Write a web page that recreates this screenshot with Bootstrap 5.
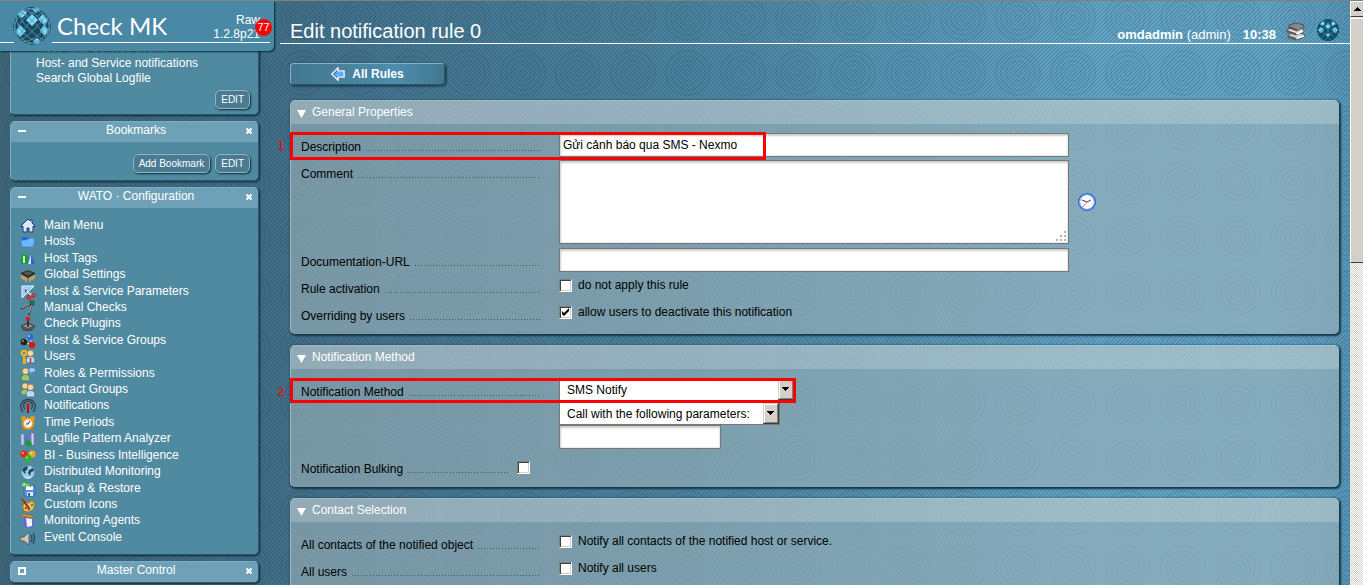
<!DOCTYPE html>
<html lang="en">
<head>
<meta charset="utf-8">
<meta name="viewport" content="width=device-width, initial-scale=1">
<title>Check MK - Edit notification rule 0</title>
<link href="https://cdn.jsdelivr.net/npm/bootstrap@5.3.0/dist/css/bootstrap.min.css" rel="stylesheet">
<style>
  body {
    font-family: "Liberation Sans", Arial, sans-serif;
    font-size: 12px; line-height: 16px; color: #000;
    background:
      url("data:image/svg+xml,%3Csvg xmlns='http://www.w3.org/2000/svg' width='55' height='55'%3E%3Cg fill='none' stroke='%23002038' stroke-opacity='.07' stroke-width='2'%3E%3Ccircle cx='27' cy='27' r='3'/%3E%3Ccircle cx='27' cy='27' r='8'/%3E%3Ccircle cx='27' cy='27' r='12'/%3E%3Ccircle cx='27' cy='27' r='17'/%3E%3Ccircle cx='27' cy='27' r='22'/%3E%3C/g%3E%3C/svg%3E") 1px 46px,
      url("data:image/svg+xml,%3Csvg xmlns='http://www.w3.org/2000/svg' width='4' height='4'%3E%3Cpath d='M-1 1L1-1M0 4L4 0M3 5L5 3' stroke='%23001828' stroke-opacity='.18'/%3E%3C/svg%3E"),
      linear-gradient(90deg, #40667a 0, #42708a 22%, #4b829d 50%, #61a1c1 80%, #62a2c2 94%, #5593b3 100%);
    border-top: 1px solid #808080;
  }
  a { color: #fff; text-decoration: none; }
  a:hover { color: #dff; }

  /* sidebar */
  .side { width: 274px; }
  .side-top { height: 50px; background: #4a89a6; border-bottom-right-radius: 5px; box-shadow: 1px 1px 2px #0a2a3a; z-index: 2; }
  .side-top .rule { height: 1px; background: #fff; left: 0; right: 4px; top: 41px; }
  .brand-mark { left: 12px; top: 5px; width: 40px; height: 40px; }
  .brand-disc { background: #4a89a6; left: 14px; top: 38px; width: 38px; height: 8px; }
  .brand-name { font-family: Lato, sans-serif; font-size: 24px; line-height: 32px; padding: 9px 0 0 57px; }
  .version { right: 14px; top: 12px; line-height: 14px; }
  .count { right: 2px; top: 18px; width: 17px; height: 17px; font-size: 11px; line-height: 17px; background: #f00; }
  .side-list { padding: 0 15px 0 10px; gap: 6px; }
  .snapin { background: #508aa0; border: 1px solid #7eafc3; border-right-color: #2f5a6e; border-bottom-color: #2f5a6e; border-radius: 5px; box-shadow: 1px 1px 2px #0a2a3a; overflow: hidden; }
  .snapin-head { background: #6ea1b8; height: 20px; line-height: 16px; padding: 0 4px 0 7px; }
  .snapin-head button { background: none; border: 0; padding: 0; width: 9px; height: 18px; }
  .snapin-head svg { display: block; width: 9px; height: 9px; }
  .events { margin-top: -42px; height: 106px; padding: 31px 8px 0 25px; line-height: 15px; }
  .btn-mini { font-size: 10px; line-height: 13px; color: #fff; padding: 2px 5px; background: #4a7b93; border: 1px solid #8fb6c6; border-radius: 5px; box-shadow: 1px 1px 2px #0a2a3a; }
  .marks-foot { gap: 5px; padding: 12px 8px 7px; }
  .wato { min-height: 346px; padding: 9px; }
  .wato svg { width: 16px; height: 16px; flex: none; position: relative; top: 1px; }
  .wato a { gap: 8px; }

  /* main column */
  .main { padding: 0 11px 0 16px; }
  .page-head { margin: 0 -11px 0 -10px; padding: 17px 10px 0 10px; height: 43px; border-bottom: 1px solid #fff; color: #fff; }
  .page-head h1 { font-size: 20px; line-height: 26px; margin: 0; }
  .page-head svg { width: 24px; height: 24px; }
  .who { font-size: 13px; line-height: 16px; padding-top: 9px; }
  .btn-rules { width: 155px; height: 22px; margin: 19px 0 15px; font-weight: bold; color: #fff; font-size: 12px; gap: 7px;
    background: linear-gradient(90deg, #437790, #4d8cab 70%, #42768f); border: 1px solid #86b3c6; border-right-color: #2d586c; border-bottom-color: #2d586c; border-radius: 4px; box-shadow: 1px 1px 3px #0a2a3a; }
  .btn-rules svg { width: 14px; height: 14px; }
  .panel { background: rgba(163, 185, 190, .57); border-radius: 5px; box-shadow: 1px 1px 2px 1px #143646; border-top: 1px solid rgba(255,255,255,.3); border-left: 1px solid rgba(255,255,255,.3); margin-bottom: 11px; }
  .panel-head { height: 23px; background: rgba(255,255,255,.2); color: #fff; gap: 6px; padding: 0 6px; border-radius: 4px 4px 0 0; }
  .panel-head h2 { font-size: 12px; line-height: 23px; margin: 0; }
  .panel-head button { background: none; border: 0; padding: 3px 0 0; line-height: 0; }
  .panel-body { padding: 9px 10px 5px; }
  .f-row { display: grid; grid-template-columns: 240px 1fr; column-gap: 18px; margin-bottom: 3px; position: relative; }
  .f-label { display: flex; gap: 5px; height: 24px; padding-top: 6px; }
  .f-label::after { content: ""; flex: 1; height: 12px; background: repeating-linear-gradient(90deg, #41565f 0 1px, transparent 1px 3px) left bottom / 100% 1px no-repeat; }
  .f-box { border: 1px solid #777; border-radius: 0; background: #fff; box-shadow: inset 1px 2px 2px #ccc, inset -1px -1px 1px #e8e8e8; padding: 0 3px; font-size: 12px; color: #000; width: 510px; max-width: 100%; height: 24px; display: block; }
  textarea.f-box { height: 84px; resize: none; }
  .f-small { width: 162px; }
  .f-select { appearance: none; border: 1px solid #777; border-radius: 0; font-size: 12px; color: #000; padding: 0 7px; display: block;
    background: #fff url("data:image/svg+xml,%3Csvg xmlns='http://www.w3.org/2000/svg' width='16' height='21'%3E%3Cpath fill='%23404040' d='M0 0h16v21H0z'/%3E%3Cpath fill='%23d4d0c8' d='M0 0h15v20H0z'/%3E%3Cpath fill='%23fff' d='M1 1h13v1H2v17H1z'/%3E%3Cpath fill='%23808080' d='M14 1v18H2v1h13V1z'/%3E%3Cpath fill='%23d4d0c8' d='M2 2h12v17H2z'/%3E%3Cpath d='M4 8h7v1H4zM5 9h5v1H5zM6 10h3v1H6zM7 11h1v1H7z'/%3E%3C/svg%3E") right 0 top 0 no-repeat; height: 23px; }
  .sel-method { width: 236px; }
  .sel-params { width: 221px; margin-top: 1px; }
  .f-method { margin-bottom: 6px; }
  .f-check { appearance: none; width: 13px; height: 13px; margin: 0; flex: none; background: #fff; border: 1px solid; border-color: #808080 #fff #fff #808080; box-shadow: inset 1px 1px #404040, inset -1px -1px #d4d0c8; }
  .f-check:checked { background: #fff url("data:image/svg+xml,%3Csvg xmlns='http://www.w3.org/2000/svg' width='11' height='11'%3E%3Cpath d='M2 4v3l2 2 5-5V1L4 6z'/%3E%3C/svg%3E"); }
  .f-tick { display: flex; align-items: center; gap: 6px; height: 16px; }
  .resize-grip { right: 2px; bottom: 2px; width: 12px; height: 12px; }
  .bulk { grid-template-columns: 209px 1fr; column-gap: 7px; }
  /* numbered highlight frames that lie over the form */
  .hl { position: absolute; left: -11px; border: 3px solid #f00; pointer-events: none; }
  .hl b { position: absolute; left: -16px; top: 3px; color: #f00; font: 12px/16px "DejaVu Sans", sans-serif; }
  .hl-1 { top: -1px; width: 476px; height: 28px; }
  .hl-2 { top: 0; width: 506px; height: 25px; }

  /* scroll bar */
  .sbar { width: 13px; background: repeating-conic-gradient(#fff 0 25%, #d4d0c8 0 50%) 0 0 / 2px 2px; overflow: hidden; }
  .sbar div { width: 16px; background: #d4d0c8; border: 1px solid; border-color: #fff #404040 #404040 #fff; }
  .sbar .s-up { height: 16px; padding: 5px 3px; line-height: 0; }
  .sbar .s-thumb { height: 245px; margin-top: 1px; }
</style>
</head>
<body class="vh-100 overflow-hidden d-flex">

<svg width="0" height="0" class="position-absolute" aria-hidden="true">
  <defs>
    <clipPath id="disc"><circle r="19"/></clipPath>
    <symbol id="globe" viewBox="-20 -20 40 40">
      <g clip-path="url(#disc)">
        <circle r="19" fill="#174a5e"/>
        <g fill="#7fdcff">
          <path d="M0-12L6-6 0 0-6-6zM-12-1L-6 5-12 11-17 6zM11-12L16-6 12-1 6-7zM12-1L17 4 13 10 8 5zM-9-18L-5-13-10-8-15-12zM4-19L8-17 4-13 0-17zM5 12L9 15 5 19 1 15z"/>
        </g>
        <g fill="none" stroke="#5793ad" stroke-width=".9">
          <g transform="rotate(45)"><ellipse rx="4" ry="19"/><ellipse rx="11" ry="19"/><ellipse rx="16" ry="19"/></g>
          <g transform="rotate(-45)"><ellipse rx="4" ry="19"/><ellipse rx="11" ry="19"/><ellipse rx="16" ry="19"/></g>
        </g>
      </g>
    </symbol>
    <symbol id="globe-small" viewBox="-12 -12 24 24">
      <circle r="11" fill="#0f5068"/>
      <path d="M0-7l3 3-3 3-3-3zM-7-3l3 3-3 3-3-3zM7-3l3 3-3 3-3-3zM5-9l3 3-3 2-2-2zM-5-9l2 3-3 2-2-2zM0 3l2 2-2 2-2-2z" fill="#86dcf8"/>
      <path d="M-8-7L7 8M-4-10L10 4M-10-3L3 10M8-7L-7 8M4-10L-10 4M10-3L-3 10" stroke="#3f86a4" stroke-width=".7"/>
    </symbol>
    <symbol id="x" viewBox="0 0 9 9"><path d="M1.500 1.500l5 5M6.500 1.500l-5 5" stroke="#fff" stroke-width="2"/></symbol>
    <symbol id="man" viewBox="0 0 10 14"><path d="M1 13V10Q1 7 5 7T9 10V13z" stroke="#456" stroke-width=".6"/><circle cx="5" cy="4" r="3" fill="#f4d6a0" stroke="#8a6a30" stroke-width=".6"/></symbol>
  </defs>
</svg>

<aside class="side d-flex flex-column flex-shrink-0 text-white vh-100">
  <header class="side-top position-relative flex-shrink-0">
    <div class="rule position-absolute"></div>
    <div class="brand-disc position-absolute"></div>
    <svg class="brand-mark position-absolute" aria-hidden="true"><use href="#globe"/></svg>
    <div class="brand-name">Check MK</div>
    <div class="version position-absolute text-end">Raw<br>1.2.8p21</div>
    <span class="count position-absolute rounded-circle text-center">77</span>
  </header>

  <nav class="side-list d-flex flex-column">
    <section class="snapin events d-flex flex-column flex-shrink-0">
      <a href="#">Host- and Service events</a>
      <a href="#">Host- and Service notifications</a>
      <a href="#">Search Global Logfile</a>
      <div class="text-end mt-1"><button class="btn-mini">EDIT</button></div>
    </section>

    <section class="snapin flex-shrink-0">
      <div class="snapin-head d-flex justify-content-between">
        <button aria-label="Collapse"><svg><path d="M0 3h8v2H0z" fill="#fff"/></svg></button>
        <span>Bookmarks</span>
        <button aria-label="Close"><svg><use href="#x"/></svg></button>
      </div>
      <div class="marks-foot d-flex justify-content-end">
        <button class="btn-mini">Add Bookmark</button><button class="btn-mini">EDIT</button>
      </div>
    </section>

    <section class="snapin flex-shrink-0">
      <div class="snapin-head d-flex justify-content-between">
        <button aria-label="Collapse"><svg><path d="M0 3h8v2H0z" fill="#fff"/></svg></button>
        <span>WATO · Configuration</span>
        <button aria-label="Close"><svg><use href="#x"/></svg></button>
      </div>
      <ul class="wato list-unstyled m-0 d-flex flex-column">
        <li class="flex-fill"><a class="d-flex" href="#"><svg viewBox="0 0 16 16"><path d="M1 8L8 1l2 2V2h2v3l3 3-1 1-1-1v6H9v-4H7v4H3V8L2 9z" fill="#dce9fa" stroke="#1d3c70"/></svg>Main Menu</a></li>
        <li class="flex-fill"><a class="d-flex" href="#"><svg viewBox="0 0 16 16"><path d="M2 3h5l1 1h5v9H2z" fill="#2368c8"/><path d="M1 6q4 1 7-1t7 0l-2 8H2z" fill="#6db8fa" stroke="#2f7de0" stroke-width=".6"/></svg>Hosts</a></li>
        <li class="flex-fill"><a class="d-flex" href="#"><svg viewBox="0 0 16 16"><path d="M1 4h7v9H1z" fill="#1d9c2c"/><path d="M3 5h2v7H3z" fill="#c8f8c0"/><path d="M11 3l4 10H7z" fill="#2e62d8"/><path d="M11 3v10H8z" fill="#cfe2ff"/></svg>Host Tags</a></li>
        <li class="flex-fill"><a class="d-flex" href="#"><svg viewBox="0 0 16 16"><path d="M2 8v4M4 9v4M6 10v5M10 10v5M12 9v4M14 8v4" stroke="#e0a050" stroke-width="1.600"/><path d="M8 3l7 3v1l-7 4-7-4V6z" fill="#2a2a2a"/><path d="M8 4l5 2-5 3-5-3z" fill="#555"/></svg>Global Settings</a></li>
        <li class="flex-fill"><a class="d-flex" href="#"><svg viewBox="0 0 16 16"><path d="M2 2h12L2 14z" fill="#9cc8f4" stroke="#e8f4ff"/><path d="M5 5h4L5 9z" fill="#3a6f98"/><path d="M6 4l5 8M8 9l6 2" stroke="#ddd" stroke-width="1.200"/><g fill="none" stroke="#d02030" stroke-width="1.500"><circle cx="9" cy="13.500" r="1.700"/><circle cx="13.500" cy="11.500" r="1.500"/></g></svg>Host &amp; Service Parameters</a></li>
        <li class="flex-fill"><a class="d-flex" href="#"><svg viewBox="0 0 16 16"><path d="M1 9L12 3 9 15" fill="none" stroke="#333" stroke-width="1.600"/><path d="M2 8l9-5M12 4L9 13" stroke="#ccc" stroke-width=".8"/><path d="M10 1h4v4h-4z" fill="#2b7a2b" stroke="#333" stroke-width=".6"/></svg>Manual Checks</a></li>
        <li class="flex-fill"><a class="d-flex" href="#"><svg viewBox="0 0 16 16"><path d="M1 10l7-3 7 3-3 4-4 1-5-1z" fill="#555" stroke="#333" stroke-width=".6"/><path d="M3 10l5-2 5 2-5 2z" fill="#999"/><path d="M8 3v8" stroke="#222" stroke-width="1.500"/><circle cx="8" cy="3" r="2.300" fill="#e01818"/></svg>Check Plugins</a></li>
        <li class="flex-fill"><a class="d-flex" href="#"><svg viewBox="0 0 16 16"><path d="M3 9L10 4l2 8z" fill="none" stroke="#ddd"/><circle cx="4" cy="9" r="3.300" fill="#222"/><circle cx="10" cy="4" r="3" fill="#2a66dc"/><circle cx="9" cy="3" r="1" fill="#cfe2ff"/><circle cx="12" cy="12" r="3.200" fill="#d81818"/><circle cx="3" cy="8" r="1" fill="#999"/></svg>Host &amp; Service Groups</a></li>
        <li class="flex-fill"><a class="d-flex" href="#"><svg viewBox="0 0 16 16"><use href="#man" x="5" y="0" width="11" height="15" fill="#b8d8fc"/><path d="M10.500 9v5" stroke="#d22" stroke-width="1.500"/><circle cx="4" cy="4" r="2.300" fill="none" stroke="#f0b820" stroke-width="2"/><path d="M4 6v9M4 11h2M4 14h2" stroke="#f0b820" stroke-width="2"/></svg>Users</a></li>
        <li class="flex-fill"><a class="d-flex" href="#"><svg viewBox="0 0 16 16"><use href="#man" x="0" y="1" width="11" height="15" fill="#8ccc78"/><ellipse cx="12" cy="4" rx="3.500" ry="2.500" fill="#9cc8fc" stroke="#3a76c8" stroke-width=".7"/><path d="M10 6v3l2-3z" fill="#6aa2e8"/></svg>Roles &amp; Permissions</a></li>
        <li class="flex-fill"><a class="d-flex" href="#"><svg viewBox="0 0 16 16"><use href="#man" x="0" y="0" width="10" height="14" fill="#8ccc78"/><use href="#man" x="5" y="1" width="11" height="15" fill="#b8d8fc"/></svg>Contact Groups</a></li>
        <li class="flex-fill"><a class="d-flex" href="#"><svg viewBox="0 0 16 16"><g fill="none" stroke="#2c4450" stroke-width="1.400"><path d="M3 14a7.300 7.300 0 1 1 10 0"/><path d="M5 11a4.500 4.500 0 1 1 6 0"/></g><circle cx="8" cy="7" r="2" fill="#e02020"/><path d="M7 8h2v7H7z" fill="#b81010"/></svg>Notifications</a></li>
        <li class="flex-fill"><a class="d-flex" href="#"><svg viewBox="0 0 16 16"><circle cx="3.500" cy="3.500" r="2.500" fill="#e89820"/><circle cx="12.500" cy="3.500" r="2.500" fill="#e89820"/><path d="M3 15l2-3M13 15l-2-3" stroke="#c87810" stroke-width="2"/><circle cx="8" cy="8.500" r="5" fill="#f4f4fc" stroke="#f0a020" stroke-width="2"/><path d="M10 6L8 9H6" fill="none" stroke="#333"/></svg>Time Periods</a></li>
        <li class="flex-fill"><a class="d-flex" href="#"><svg viewBox="0 0 16 16"><path d="M1 3h3v11H1z" fill="#b8d0f8" stroke="#5a7cc0" stroke-width=".6"/><path d="M5 6h3v8H5z" fill="#8a5ad0"/><path d="M11 2h3v12h-3z" fill="#d8c8fc" stroke="#7a5ac0" stroke-width=".6"/><path d="M7 9l4 1 1 4-4 2-3-3z" fill="#18a038"/></svg>Logfile Pattern Analyzer</a></li>
        <li class="flex-fill"><a class="d-flex" href="#"><svg viewBox="0 0 16 16"><circle cx="4" cy="6" r="3.500" fill="#e82818"/><circle cx="12" cy="6" r="3.500" fill="#f0a818"/><circle cx="8" cy="10.500" r="3.500" fill="#28b828"/><g fill="#fff" fill-opacity=".6"><circle cx="3" cy="5" r="1"/><circle cx="11" cy="5" r="1"/><circle cx="7" cy="9.500" r="1"/></g></svg>BI - Business Intelligence</a></li>
        <li class="flex-fill"><a class="d-flex" href="#"><svg viewBox="0 0 16 16"><circle cx="8" cy="8" r="7" fill="#9ccaf0" stroke="#3a6890" stroke-width=".6"/><path d="M2 6q2-4 6-4l-1 4-2 1 1 3-2-1zM9 6l4-2 1 3-3 1-1 4-2-3z" fill="#1a4c50"/><path d="M3 12q5 3 10 0-2 3-5 3t-5-3z" fill="#e8f4fc"/></svg>Distributed Monitoring</a></li>
        <li class="flex-fill"><a class="d-flex" href="#"><svg viewBox="0 0 16 16"><path d="M4 5h11v10H4z" fill="#5a8ee0" stroke="#2a58b0" stroke-width=".6"/><path d="M6 5h7v4H6z" fill="#fff"/><path d="M7 11h6v4H7z" fill="#dde6f4"/><path d="M8 12h2v3H8z" fill="#3a62a8"/><path d="M1 4l4-4v2q5 0 6 4-3-2-6-1v2z" fill="#98e080" stroke="#2f8030" stroke-width=".6"/></svg>Backup &amp; Restore</a></li>
        <li class="flex-fill"><a class="d-flex" href="#"><svg viewBox="0 0 16 16"><path d="M3 8q3-4 6-2 3-4 5 0 2 7-6 9-6 0-5-7z" fill="#f8c050" stroke="#a86818" stroke-width=".8"/><circle cx="6" cy="11" r="1.200" fill="#d22"/><circle cx="9" cy="12" r="1.200" fill="#2850d8"/><circle cx="12" cy="8" r="1.200" fill="#28a028"/><path d="M2 2l7 9" stroke="#802010" stroke-width="1.600"/><path d="M1 1l3 2-1 2z" fill="#e83018"/></svg>Custom Icons</a></li>
        <li class="flex-fill"><a class="d-flex" href="#"><svg viewBox="0 0 16 16"><path d="M4 3l9 2v9l-7 1-2-2z" fill="#6a62d8"/><path d="M6 5l6 1v7l-5 1z" fill="#f0f0ff"/><path d="M2 1l11 2 1 2-12-2z" fill="#f0a020" stroke="#a86010" stroke-width=".6"/></svg>Monitoring Agents</a></li>
        <li class="flex-fill"><a class="d-flex" href="#"><svg viewBox="0 0 16 16"><path d="M1 7h3l5-5v13l-5-4H1z" fill="#c8c8c8" stroke="#444" stroke-width=".7"/><path d="M1 8h4v2H1z" fill="#f0c040"/><path d="M11 5q2 3 0 7M13 3q3 5 0 11" fill="none" stroke="#244870" stroke-width="1.300"/></svg>Event Console</a></li>
      </ul>
    </section>

    <section class="snapin flex-shrink-0">
      <div class="snapin-head d-flex justify-content-between">
        <button aria-label="Expand"><svg><path d="M1 1h6v6H1z" fill="none" stroke="#fff" stroke-width="2"/></svg></button>
        <span>Master Control</span>
        <button aria-label="Close"><svg><use href="#x"/></svg></button>
      </div>
    </section>
  </nav>
</aside>

<main class="main flex-grow-1">
  <header class="page-head d-flex justify-content-between">
    <h1 class="fw-normal">Edit notification rule 0</h1>
    <div class="d-flex">
      <span class="who"><strong>omdadmin</strong> (admin)</span>
      <strong class="who ms-2 ps-1 me-2">10:38</strong>
      <svg viewBox="0 0 24 24" aria-label="Documentation"><g stroke="#444" stroke-width=".8"><path d="M4 17l6-3 10 2v3l-8 3-8-3z" fill="#ccc"/><path d="M3 12l6-3 10 2v3l-7 3-9-3z" fill="#ddd"/><path d="M5 7l7-2 8 2v2l-7 4-8-3z" fill="#888"/></g><path d="M3 13l9 3M4 18l8 3M5 9l8 3" stroke="#555" stroke-width="1.500"/><path d="M13 20l7-2M13 16l6-3" stroke="#fff" stroke-width="1.500"/></svg>
      <svg class="ms-2" aria-label="Check MK"><use href="#globe-small"/></svg>
    </div>
  </header>

  <button class="btn-rules d-flex align-items-center justify-content-center p-0"><svg viewBox="0 0 14 14" aria-hidden="true"><path d="M1 7l6-6v3h6v6H7v3z" fill="#2038a0" stroke="#e8f0ff" stroke-width="1.600"/><path d="M3 7l3-3v1h6v4H6v1z" fill="#5ab0f8"/></svg>All Rules</button>

  <section class="panel">
    <div class="panel-head d-flex align-items-center">
      <button aria-label="Fold"><svg width="9" height="8"><path d="M0 0h9L4.500 8z" fill="#fff"/></svg></button>
      <h2 class="fw-normal">General Properties</h2>
    </div>
    <div class="panel-body">
      <div class="f-row">
        <label class="f-label" for="desc">Description</label>
        <input class="f-box" id="desc" type="text" value="Gửi cảnh báo qua SMS - Nexmo">
        <div class="hl hl-1"><b>1</b></div>
      </div>
      <div class="f-row mb-1">
        <label class="f-label" for="comment">Comment</label>
        <div class="d-flex align-items-center gap-2">
          <div class="position-relative">
            <textarea class="f-box" id="comment"></textarea>
            <svg class="resize-grip position-absolute" aria-hidden="true"><path d="M9 1h2v2H9zM5 5h2v2H5zM9 5h2v2H9zM1 9h2v2H1zM5 9h2v2H5zM9 9h2v2H9z" fill="#b4b4b4"/></svg>
          </div>
          <svg width="20" height="20" viewBox="0 0 20 20" aria-label="Insert date"><circle cx="10" cy="10" r="8" fill="#f8f8ff" stroke="#2c62d0" stroke-width="2"/><circle cx="10" cy="10" r="7.500" fill="none" stroke="#9cc4ff" stroke-width=".8"/><path d="M5 8l5 2 4-2" fill="none" stroke="#444"/><path d="M10 10l-4 5" stroke="#f07070"/></svg>
        </div>
      </div>
      <div class="f-row">
        <label class="f-label" for="docurl">Documentation-URL</label>
        <input class="f-box" id="docurl" type="text">
      </div>
      <div class="f-row">
        <span class="f-label">Rule activation</span>
        <label class="f-tick mt-1 pb-1"><input class="f-check" type="checkbox">do not apply this rule</label>
      </div>
      <div class="f-row">
        <span class="f-label">Overriding by users</span>
        <label class="f-tick mt-1 pb-1"><input class="f-check" type="checkbox" checked>allow users to deactivate this notification</label>
      </div>
    </div>
  </section>

  <section class="panel">
    <div class="panel-head d-flex align-items-center">
      <button aria-label="Fold"><svg width="9" height="8"><path d="M0 0h9L4.500 8z" fill="#fff"/></svg></button>
      <h2 class="fw-normal">Notification Method</h2>
    </div>
    <div class="panel-body">
      <div class="f-row f-method">
        <label class="f-label" for="method">Notification Method</label>
        <div>
          <select class="f-select sel-method" id="method"><option>SMS Notify</option></select>
          <select class="f-select sel-params" aria-label="Parameters"><option>Call with the following parameters:</option></select>
          <input class="f-box f-small" type="text" aria-label="Parameter">
        </div>
        <div class="hl hl-2"><b>2</b></div>
      </div>
      <div class="f-row bulk">
        <label class="f-label" for="bulk">Notification Bulking</label>
        <span class="f-tick pt-2"><input class="f-check" id="bulk" type="checkbox"></span>
      </div>
    </div>
  </section>

  <section class="panel">
    <div class="panel-head d-flex align-items-center">
      <button aria-label="Fold"><svg width="9" height="8"><path d="M0 0h9L4.500 8z" fill="#fff"/></svg></button>
      <h2 class="fw-normal">Contact Selection</h2>
    </div>
    <div class="panel-body">
      <div class="f-row">
        <span class="f-label">All contacts of the notified object</span>
        <label class="f-tick mt-1 pb-1"><input class="f-check" type="checkbox">Notify all contacts of the notified host or service.</label>
      </div>
      <div class="f-row">
        <span class="f-label">All users</span>
        <label class="f-tick mt-1 pb-1"><input class="f-check" type="checkbox">Notify all users</label>
      </div>
    </div>
  </section>
</main>

<div class="sbar flex-shrink-0 vh-100" aria-hidden="true">
  <div class="s-up"><svg width="7" height="4"><path d="M3 0h1v1h1v1h1v1h1v1H0V3h1V2h1V1h1z"/></svg></div>
  <div class="s-thumb"></div>
</div>

<script src="https://cdn.jsdelivr.net/npm/bootstrap@5.3.0/dist/js/bootstrap.bundle.min.js"></script>
</body>
</html>
